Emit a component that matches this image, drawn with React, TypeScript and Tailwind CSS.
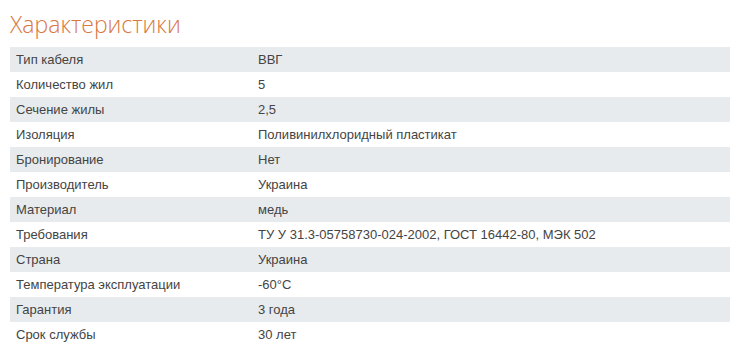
const rows: [string, string][] = [
  ["Тип кабеля", "ВВГ"],
  ["Количество жил", "5"],
  ["Сечение жилы", "2,5"],
  ["Изоляция", "Поливинилхлоридный пластикат"],
  ["Бронирование", "Нет"],
  ["Производитель", "Украина"],
  ["Материал", "медь"],
  ["Требования", "ТУ У 31.3-05758730-024-2002, ГОСТ 16442-80, МЭК 502"],
  ["Страна", "Украина"],
  ["Температура эксплуатации", "-60°C"],
  ["Гарантия", "3 года"],
  ["Срок службы", "30 лет"],
];

export default function App() {
  return (
    <div className="w-[747px] h-[352px] bg-white px-[10px] pt-[10px] overflow-hidden">
      <h2 className="font-['Open_Sans',sans-serif] font-light text-[23px] leading-[29px] text-[#d9783f] mb-[8px]">
        Характеристики
      </h2>
      <div className="w-[720px] font-['Liberation_Sans',Arial,sans-serif] text-[13px] text-[#444444]">
        {rows.map(([label, value], i) => (
          <div
            key={label}
            className={
              "flex h-[25px] items-center " +
              (i % 2 === 0 ? "bg-[#e8ebed]" : "bg-white")
            }
          >
            <div className="w-[248px] pl-[6px]">{label}</div>
            <div>{value}</div>
          </div>
        ))}
      </div>
    </div>
  );
}
